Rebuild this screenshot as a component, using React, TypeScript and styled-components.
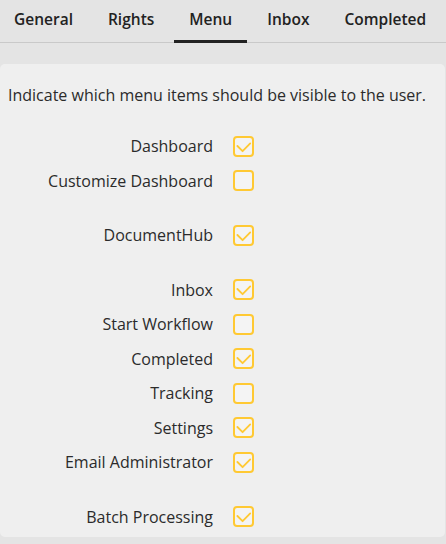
import React from "react";
import styled, { createGlobalStyle } from "styled-components";

const Global = createGlobalStyle`
  html, body { margin: 0; padding: 0; background: #e4e4e4; }
  body { font-family: "Open Sans", "Noto Sans", sans-serif; color: #2b2b2b; }
`;

const Page = styled.div`
  width: 446px;
  height: 544px;
  display: flex;
  flex-direction: column;
  background: #e4e4e4;
  overflow: hidden;
`;

const TabBar = styled.div`
  height: 43px;
  box-sizing: border-box;
  display: flex;
  gap: 5px;
  margin-left: -1px;
  border-bottom: 1px solid #c9c9c9;
`;

const Tab = styled.div<{ $active?: boolean }>`
  position: relative;
  padding: 0 15px 4px;
  display: flex;
  align-items: center;
  font-size: 15.5px;
  font-weight: 600;
  color: #222;
  white-space: nowrap;
  &::after {
    content: "";
    position: absolute;
    left: 0;
    right: 0;
    bottom: -1px;
    height: 3px;
    background: ${(p) => (p.$active ? "#222" : "transparent")};
  }
`;

const Panel = styled.div`
  margin: 21px 1px 0 0;
  background: #efefef;
  border-radius: 5px;
  height: 473px;
  padding: 19px 0 0 8px;
  box-sizing: border-box;
`;

const Intro = styled.p`
  margin: 0 0 22px 0;
  font-size: 16px;
  line-height: 24px;
  color: #2b2b2b;
`;

const Group = styled.div`
  display: flex;
  flex-direction: column;
  & + & { margin-top: 20px; }
`;

const Row = styled.label`
  display: grid;
  grid-template-columns: 205px 21px;
  column-gap: 20px;
  align-items: center;
  height: 34.5px;
`;

const Label = styled.span`
  text-align: right;
  font-size: 16px;
  color: #2b2b2b;
  white-space: nowrap;
`;

const Box = styled.span`
  width: 21px;
  height: 21px;
  box-sizing: border-box;
  border: 2px solid #ffc933;
  border-radius: 4px;
  background: #f4f4f4;
  display: flex;
  align-items: center;
  justify-content: center;
`;

const Check = () => (
  <svg width="17" height="17" viewBox="0 0 17 17" fill="none">
    <path d="M2.4 8 L7.6 13.2 L15.2 5.4" stroke="#ffc933" strokeWidth="1.8" strokeLinecap="round" strokeLinejoin="round" />
  </svg>
);

type Item = { label: string; checked: boolean };

const groups: Item[][] = [
  [
    { label: "Dashboard", checked: true },
    { label: "Customize Dashboard", checked: false },
  ],
  [{ label: "DocumentHub", checked: true }],
  [
    { label: "Inbox", checked: true },
    { label: "Start Workflow", checked: false },
    { label: "Completed", checked: true },
    { label: "Tracking", checked: false },
    { label: "Settings", checked: true },
    { label: "Email Administrator", checked: true },
  ],
  [{ label: "Batch Processing", checked: true }],
];

const tabs = ["General", "Rights", "Menu", "Inbox", "Completed"];

export default function App() {
  return (
    <Page>
      <Global />
      <TabBar>
        {tabs.map((t) => (
          <Tab key={t} $active={t === "Menu"}>
            {t}
          </Tab>
        ))}
      </TabBar>
      <Panel>
        <Intro>Indicate which menu items should be visible to the user.</Intro>
        {groups.map((g, i) => (
          <Group key={i}>
            {g.map((it) => (
              <Row key={it.label}>
                <Label>{it.label}</Label>
                <Box>{it.checked && <Check />}</Box>
              </Row>
            ))}
          </Group>
        ))}
      </Panel>
    </Page>
  );
}
